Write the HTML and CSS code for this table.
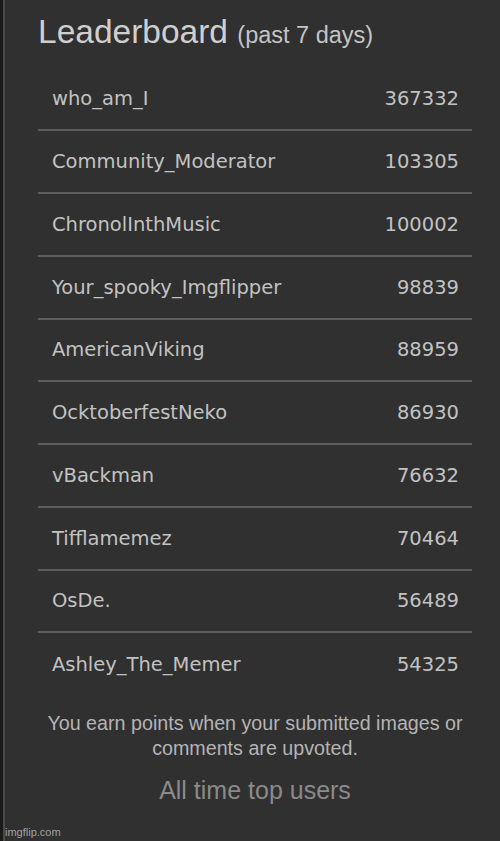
FILE: index.html
```html
<!DOCTYPE html>
<html lang="en">
<head>
<meta charset="utf-8">
<title>Leaderboard</title>
<link rel="stylesheet" href="styles.css">
</head>
<body>
<div class="page">
  <div class="inner">
    <h1 class="title">Leaderboard <span class="sub">(past 7 days)</span></h1>
    <ul class="board">
      <li class="row"><span class="name">who_am_I</span><span class="pts">367332</span></li>
      <li class="row"><span class="name">Community_Moderator</span><span class="pts">103305</span></li>
      <li class="row"><span class="name">ChronolInthMusic</span><span class="pts">100002</span></li>
      <li class="row"><span class="name">Your_spooky_Imgflipper</span><span class="pts">98839</span></li>
      <li class="row"><span class="name">AmericanViking</span><span class="pts">88959</span></li>
      <li class="row"><span class="name">OcktoberfestNeko</span><span class="pts">86930</span></li>
      <li class="row"><span class="name">vBackman</span><span class="pts">76632</span></li>
      <li class="row"><span class="name">Tifflamemez</span><span class="pts">70464</span></li>
      <li class="row"><span class="name">OsDe.</span><span class="pts">56489</span></li>
      <li class="row"><span class="name">Ashley_The_Memer</span><span class="pts">54325</span></li>
    </ul>
    <p class="note">You earn points when your submitted images or comments are upvoted.</p>
    <div class="alltime">All time top users</div>
  </div>
  <div class="watermark">imgflip.com</div>
</div>
</body>
</html>
```
FILE: styles.css
```css
html, body {
  margin: 0;
  padding: 0;
  background: #303030;
}
.page {
  position: relative;
  height: 841px;
  box-sizing: border-box;
  border-left: 3px solid #1b1b1b;
  box-shadow: inset 2px 0 0 #4a4a4a;
  background: #303030;
  overflow: hidden;
}
.inner {
  width: 434px;
  padding-left: 35px;
}
.title {
  margin: 0;
  padding-top: 13px;
  height: 38px;
  line-height: 38px;
  font-family: "Liberation Sans", Arial, sans-serif;
  font-weight: normal;
  font-size: 33.5px;
  color: #cfcfcf;
  white-space: nowrap;
}
.sub {
  font-size: 23.5px;
  color: #c4c4c4;
}
.board {
  list-style: none;
  margin: 17.5px 0 0;
  padding: 0;
}
.row {
  display: flex;
  align-items: center;
  justify-content: space-between;
  height: 60.75px;
  padding: 0 13px 0 14px;
  border-bottom: 2px solid #5c5c5c;
  font-family: "DejaVu Sans", Verdana, sans-serif;
  font-size: 19.5px;
  color: #c2c2c2;
}
.row:last-child {
  border-bottom: none;
  height: 62.75px;
}
.note {
  margin: 15px 0 0;
  font-family: "Liberation Sans", Arial, sans-serif;
  font-size: 19.7px;
  line-height: 25px;
  color: #b4b4b4;
  text-align: center;
  padding: 0;
}
.alltime {
  margin-top: 14px;
  font-family: "Liberation Sans", Arial, sans-serif;
  font-size: 25px;
  line-height: 30px;
  color: #8a8a8a;
  text-align: center;
}
.watermark {
  position: absolute;
  left: 2px;
  bottom: 3px;
  font-family: "Liberation Sans", Arial, sans-serif;
  font-size: 11px;
  line-height: 12px;
  color: rgba(255, 255, 255, 0.55);
}
```
